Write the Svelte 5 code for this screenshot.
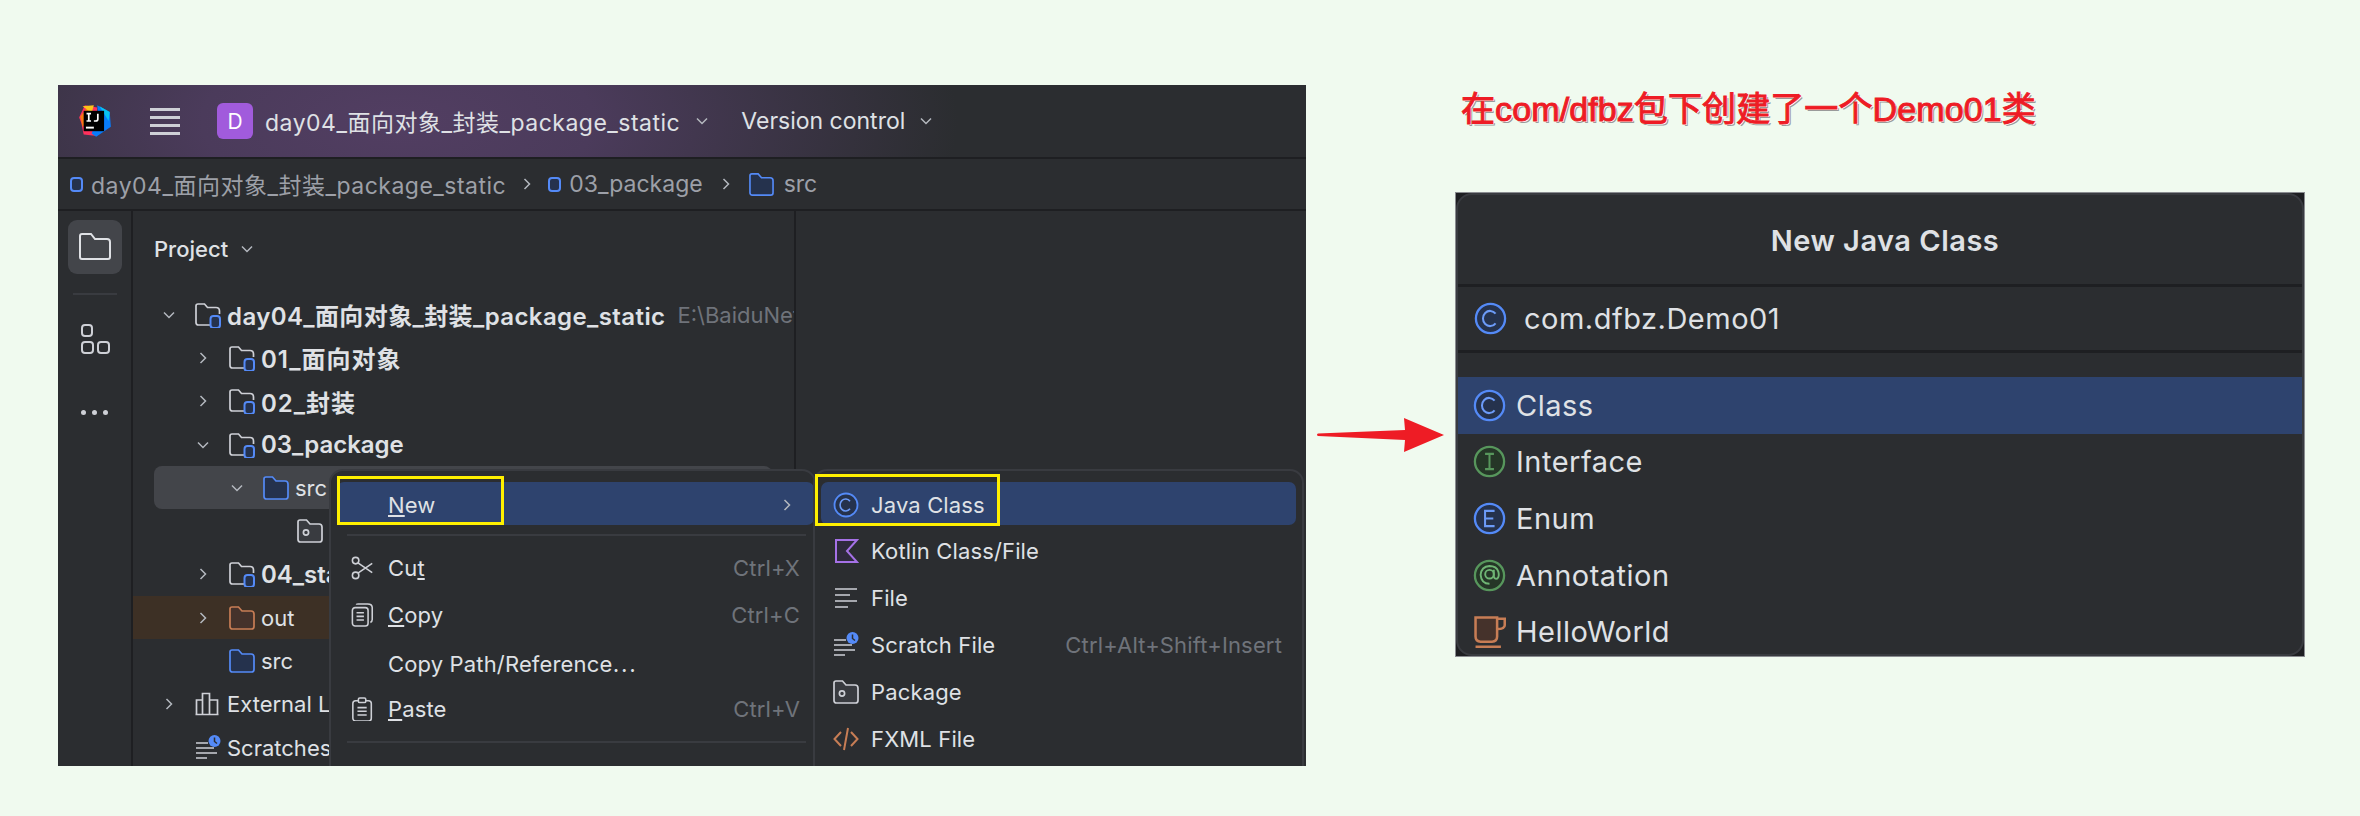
<script>
  const tree = [
    { depth: 0, chev: 'down', icon: 'module', text: 'day04_面向对象_封装_package_static', bold: true, hint: 'E:\\BaiduNetdisk', sp: 'sp-root' },
    { depth: 1, chev: 'right', icon: 'module', text: '01_面向对象', bold: true, sp: 'sp-cjk' },
    { depth: 1, chev: 'right', icon: 'module', text: '02_封装', bold: true, sp: 'sp-cjk' },
    { depth: 1, chev: 'down', icon: 'module', text: '03_package', bold: true },
    { depth: 2, chev: 'down', icon: 'blue', text: 'src', selected: true },
    { depth: 3, chev: '', icon: 'package', text: 'com.dfbz' },
    { depth: 1, chev: 'right', icon: 'module', text: '04_static', bold: true },
    { depth: 1, chev: 'right', icon: 'orange', text: 'out', excluded: true },
    { depth: 1, chev: '', icon: 'blue', text: 'src' },
    { depth: 0, chev: 'right', icon: 'libs', text: 'External Libraries' },
    { depth: 0, chev: '', icon: 'scratch', text: 'Scratches and Consoles', tight: true }
  ];
  const sub = [
    { icon: 'class', text: 'Java Class', active: true },
    { icon: 'kotlin', text: 'Kotlin Class/File' },
    { icon: 'file', text: 'File' },
    { icon: 'scratch', text: 'Scratch File', key: 'Ctrl+Alt+Shift+Insert' },
    { icon: 'package', text: 'Package' },
    { icon: 'fxml', text: 'FXML File' }
  ];
  const kinds = [
    { icon: 'class', text: 'Class', active: true },
    { icon: 'interface', text: 'Interface' },
    { icon: 'enum', text: 'Enum' },
    { icon: 'annotation', text: 'Annotation' },
    { icon: 'cup', text: 'HelloWorld' }
  ];
</script>

{#snippet chevron(dir)}
  <svg class="chev" viewBox="0 0 14 14" fill="none" stroke="#b4b8bf" stroke-width="1.5">
    {#if dir === 'down'}<path d="M2 4.5 7 9.5 12 4.5" />{:else}<path d="M4.5 2 9.5 7 4.5 12" />{/if}
  </svg>
{/snippet}

{#snippet icon(name, size = 26)}
  <svg class="ic" width={size} height={size} viewBox="0 0 26 26" fill="none" stroke-width="1.7" style="width:{size}px;height:{size}px">
    {#if name === 'module'}
      <path d="M15 23H3.5Q1 23 1 20.500V4Q1 2 3 2H9.500L12.500 5.500H21Q24.500 5.500 24.500 9V12" stroke="#ced0d6" />
      <rect x="15.500" y="14" width="9.500" height="12" rx="3" fill="#25324d" stroke="#548af7" stroke-width="2" />
    {:else if name === 'blue'}
      <path d="M3.500 24Q1 24 1 21.500V4Q1 2 3 2H9.500L13 6H22Q25 6 25 9V21.500Q25 24 22.500 24Z" fill="#25324d" stroke="#548af7" />
    {:else if name === 'orange'}
      <path d="M3.500 24Q1 24 1 21.500V4Q1 2 3 2H9.500L13 6H22Q25 6 25 9V21.500Q25 24 22.500 24Z" fill="#45322b" stroke="#c77d55" />
    {:else if name === 'package'}
      <path d="M3.500 24Q1 24 1 21.500V4Q1 2 3 2H9.500L13 6H22Q25 6 25 9V21.500Q25 24 22.500 24Z" fill="#393b40" stroke="#ced0d6" />
      <circle cx="9" cy="14.500" r="2.600" stroke="#ced0d6" />
    {:else if name === 'libs'}
      <path d="M1.500 23.500V9H7.500V23.500M7.500 23.500V2.500H14.500V23.500M14.500 23.500V9H22.500V23.500M0.500 23.500H23.500" stroke="#ced0d6" />
    {:else if name === 'scratch'}
      <path d="M1 8H13M1 13H19M1 18H22M1 23H12" stroke="#ced0d6" />
      <circle cx="19.500" cy="6" r="6" fill="#548af7" />
      <path d="M19.500 2.500V6.500L22 8.500" stroke="#2b2d30" stroke-width="1.500" />
    {:else if name === 'file'}
      <path d="M2 4H24M2 10H17M2 16H24M2 22H15" stroke="#ced0d6" />
    {:else if name === 'kotlin'}
      <path d="M3 2H24L14 13 24 24H3Z" fill="#2e2a3c" stroke="#a571e6" stroke-width="2" />
    {:else if name === 'fxml'}
      <path d="M8 6 1.500 13 8 20M18 6 24.500 13 18 20M15 2 11 24" stroke="#c77d55" stroke-width="2" />
    {:else if name === 'class'}
      <circle cx="13" cy="13" r="11.500" fill="#25324d" stroke="#548af7" stroke-width="1.800" />
      <path d="M17 9.200A5.600 6 0 1 0 17 16.800" stroke="#6c9bf8" stroke-width="1.600" />
    {:else if name === 'enum'}
      <circle cx="13" cy="13" r="11.500" fill="#25324d" stroke="#548af7" stroke-width="1.800" />
      <path d="M17 7H9.500V19H17M9.500 13H16" stroke="#6c9bf8" stroke-width="1.600" />
    {:else if name === 'interface'}
      <circle cx="13" cy="13" r="11.500" fill="#253627" stroke="#57965c" stroke-width="1.800" />
      <path d="M9.500 7H16.500M9.500 19H16.500M13 7V19" stroke="#57965c" stroke-width="1.600" />
    {:else if name === 'annotation'}
      <circle cx="13" cy="13" r="11.500" stroke="#57965c" stroke-width="1.800" fill="#253627" />
      <circle cx="13" cy="12" r="3.400" stroke="#6fb574" stroke-width="1.500" />
      <path d="M16.400 8.500V13.500Q16.600 16 19 15.500Q21 14 20 10Q18.500 5.500 13 5.500Q6.500 6 6 12.500Q6.500 19.500 13 19.500" stroke="#6fb574" stroke-width="1.500" />
    {:else if name === 'cup'}
      <path d="M2 2H19V17Q19 21 15 21H6Q2 21 2 17Z" fill="#45322b" stroke="#c77d55" stroke-width="2" />
      <path d="M19 3H25V8Q25 11 19 11M2 25H22" stroke="#c77d55" stroke-width="2" />
    {:else if name === 'cut'}
      <circle cx="5" cy="5" r="3.500" stroke="#ced0d6" />
      <circle cx="5" cy="21" r="3.500" stroke="#ced0d6" />
      <path d="M7.500 7.500 23 18M7.500 18.500 23 8" stroke="#ced0d6" />
    {:else if name === 'copy'}
      <rect x="1.500" y="5" width="17" height="20" rx="3" stroke="#ced0d6" />
      <path d="M6 2Q6 1 8 1H18Q23 1 23 5V18Q23 20.500 21 21" stroke="#ced0d6" />
      <path d="M6 10.500H14M6 14.500H14M6 18.500H14" stroke="#ced0d6" />
    {:else if name === 'paste'}
      <rect x="2" y="4" width="20" height="22" rx="3" stroke="#ced0d6" />
      <rect x="8" y="1" width="8" height="5" rx="1.500" fill="#2b2d30" stroke="#ced0d6" />
      <path d="M7 11.500H17M7 15.500H17M7 19.500H17" stroke="#ced0d6" />
    {/if}
  </svg>
{/snippet}

<div class="page">
  <section class="window">
    <header class="titlebar">
      <svg class="logo" width="34" height="34" viewBox="0 0 30 30">
        <path d="M6 1 17 3 15 28 5 27 3 17 1 12Z" fill="#fe315d" />
        <path d="M2 11 9 2 12 14 4 20Z" fill="#f97a12" />
        <path d="M4 2 14 1 12 8Z" fill="#fcc419" />
        <path d="M17 1 28 7 29 20 16 29 12 26 18 12Z" fill="#087cfa" />
        <path d="M19 2 28 7 27 15Z" fill="#07c3f2" />
        <rect x="5" y="6" width="18" height="18" fill="#000" />
        <rect x="7" y="20" width="7" height="1.700" fill="#fff" />
        <path d="M7.500 8.500H11.500M9.500 8.500V15M7.500 15H11.500M17.500 8.500V13.500Q17.500 15 15.500 15H14" fill="none" stroke="#fff" stroke-width="1.500" />
      </svg>
      <span class="burger"><i></i><i></i><i></i><i></i></span>
      <span class="badge">D</span>
      <span class="proj">day04_面向对象_封装_package_static</span>
      {@render chevron('down')}
      <span class="vc">Version control</span>
      {@render chevron('down')}
    </header>
    <nav class="crumbs">
      <span class="sq"></span><span class="c1">day04_面向对象_封装_package_static</span>
      <span class="sepchev">{@render chevron('right')}</span>
      <span class="sq"></span><span class="c2">03_package</span>
      <span class="sepchev">{@render chevron('right')}</span>
      <span class="c3">{@render icon('blue', 25)}</span><span>src</span>
    </nav>
    <div class="body">
      <aside class="rail">
        <span class="railbtn">
          <svg width="34" height="30" viewBox="0 0 34 30" fill="none" stroke="#dfe1e5" stroke-width="2"><path d="M4 27Q2 27 2 25V4Q2 2 4 2H13L17 7H29Q32 7 32 10V25Q32 27 30 27Z" fill="#43454a" /></svg>
        </span>
        <span class="railsep"></span>
        <svg class="struct" width="30" height="32" viewBox="0 0 30 32" fill="none" stroke="#ced0d6" stroke-width="2"><rect x="2" y="2" width="10" height="11" rx="3" /><rect x="2" y="19" width="11" height="11" rx="3" /><rect x="18" y="19" width="11" height="11" rx="3" /></svg>
        <span class="dots"><i></i><i></i><i></i></span>
      </aside>
      <div class="projectpane">
        <div class="pane-head"><b>Project</b>{@render chevron('down')}</div>
        <ul class="tree">
          {#each tree as r}
            <li class="row d{r.depth}" class:selected={r.selected} class:excluded={r.excluded} class:bold={r.bold} class:tight={r.tight}>
              <span class="twist">{#if r.chev}{@render chevron(r.chev)}{/if}</span>
              {@render icon(r.icon, 26)}
              <span class="label {r.sp ?? ''}">{r.text}</span>
              {#if r.hint}<span class="hint">{r.hint}</span>{/if}
            </li>
          {/each}
        </ul>
      </div>
      <div class="editor"></div>
    </div>

    <div class="menu main">
      <div class="mi active"><span class="slot"></span><span class="mt"><u>N</u>ew</span>{@render chevron('right')}</div>
      <hr />
      <div class="mi"><span class="slot">{@render icon('cut', 24)}</span><span class="mt">Cu<u>t</u></span><span class="key">Ctrl+X</span></div>
      <div class="mi"><span class="slot">{@render icon('copy', 24)}</span><span class="mt"><u>C</u>opy</span><span class="key">Ctrl+C</span></div>
      <div class="mi"><span class="slot"></span><span class="mt">Copy Path/Reference⋯</span></div>
      <div class="mi"><span class="slot">{@render icon('paste', 24)}</span><span class="mt"><u>P</u>aste</span><span class="key">Ctrl+V</span></div>
      <hr />
      <div class="mi"><span class="slot"></span><span class="mt">Find Usages</span><span class="key">Alt+F7</span></div>
    </div>
    <div class="menu submenu">
      {#each sub as s}
        <div class="mi" class:active={s.active}>
          <span class="slot">{@render icon(s.icon, 26)}</span><span class="mt">{s.text}</span>
          {#if s.key}<span class="key">{s.key}</span>{/if}
        </div>
      {/each}
    </div>
    <span class="mark mark-new"></span>
    <span class="mark mark-java"></span>
  </section>

  <svg class="arrow" width="127" height="36" viewBox="0 0 127 36">
    <path d="M1 15.500 88 12 87 0 127 17 87 34 88 22 1 18Q-1 16.500 1 15.500Z" fill="#ee1c25" />
  </svg>

  <div class="right">
    <h2 class="note">在com/dfbz包下创建了一个Demo01类</h2>
    <section class="dialogframe">
      <div class="dialog">
        <div class="dtitle">New Java Class</div>
        <div class="dfield">{@render icon('class', 33)}<span>com.dfbz.Demo01</span></div>
        <ul class="kinds">
          {#each kinds as k}
            <li class:active={k.active}>{@render icon(k.icon, 33)}<span>{k.text}</span></li>
          {/each}
        </ul>
      </div>
    </section>
  </div>
</div>

<style>
  :global(body) { margin: 0; background: #f0faef; }
  .page {
    width: 2360px; height: 816px; box-sizing: border-box; overflow: hidden;
    display: flex; align-items: flex-start; padding: 85px 0 0 58px;
    font-family: Inter, "Noto Sans CJK SC", sans-serif; color: #dfe1e5; font-size: 22px;
  }
  svg { display: block; flex: none; }
  .chev { width: 14px; height: 14px; }
  ul { list-style: none; margin: 0; padding: 0; }

  .window { position: relative; width: 1248px; height: 681px; overflow: hidden; background: #2b2d30; flex: none; }
  .titlebar {
    height: 74px; display: flex; align-items: center; box-sizing: border-box; padding-left: 20px; font-size: 23px;
    background: radial-gradient(ellipse 560px 240px at 340px 36px, #523e62 0%, #4b3b5b 35%, #2b2d30 100%);
    border-bottom: 2px solid #1e1f22;
  }
  .logo { margin-right: 38px; }
  .burger { display: flex; flex-direction: column; gap: 5px; width: 30px; margin-right: 37px; }
  .burger i { height: 3px; background: #ced0d6; }
  .badge {
    width: 36px; height: 36px; border-radius: 6px; background: #a15bdc; color: #fff;
    display: flex; align-items: center; justify-content: center; font-size: 21px; margin-right: 12px;
  }
  .proj { margin-right: 15px; letter-spacing: 0.5px; }
  .vc { margin: 0 14px 0 32px; }

  .crumbs {
    height: 52px; display: flex; align-items: center; box-sizing: border-box; padding-left: 12px; font-size: 23px;
    color: #9da0a8; border-bottom: 2px solid #1e1f22;
  }
  .c1 { letter-spacing: 0.5px; }
  .c2 { margin-right: 2px; }
  .sq { width: 13px; height: 15px; border: 2px solid #548af7; border-radius: 4px; background: #25324d; margin-right: 8px; box-sizing: border-box; }
  .sepchev { margin: 0 14px; }
  .c3 { margin-right: 10px; margin-left: 2px; }

  .body { display: flex; height: 555px; }
  .rail { width: 73px; border-right: 2px solid #1e1f22; box-sizing: content-box; display: flex; flex-direction: column; align-items: center; padding-top: 9px; flex: none; }
  .railbtn { width: 54px; height: 54px; border-radius: 9px; background: #43454a; display: flex; align-items: center; justify-content: center; }
  .railsep { width: 44px; height: 2px; background: #393b40; margin: 19px 0 28px; }
  .struct { margin-bottom: 55px; }
  .dots { display: flex; gap: 6px; }
  .dots i { width: 5px; height: 5px; border-radius: 50%; background: #ced0d6; }

  .projectpane { width: 661px; border-right: 2px solid #1e1f22; overflow: hidden; flex: none; }
  .pane-head { height: 82px; box-sizing: border-box; padding: 0 0 7px 21px; display: flex; align-items: center; gap: 12px; margin-top: 0; }
  .pane-head b { font-weight: 500; }
  .tree { width: 700px; }
  .row { height: 43.3px; display: flex; align-items: center; white-space: nowrap; position: relative; }
  .row.bold { font-weight: 600; font-size: 24px; }
  .sp-root { letter-spacing: 0.4px; }
  .sp-cjk { letter-spacing: 1px; }
  .row.d0 { padding-left: 29px; }
  .row.d1 { padding-left: 63px; }
  .row.d2 { padding-left: 97px; }
  .row.d3 { padding-left: 131px; }
  .twist { width: 33px; flex: none; display: flex; }
  .row .ic { margin-right: 6px; }
  .row.selected { margin-left: 21px; padding-left: 76px; width: 618px; box-sizing: border-box; border-radius: 8px; background: #43454a; }
  .row.excluded { background: #3d3025; }
  .hint { color: #6f737a; font-weight: 400; font-size: 22px; margin-left: 12px; }
  .editor { flex: 1; }

  .menu { position: absolute; top: 384px; background: #2b2d30; border: 2px solid #393b40; border-radius: 14px; box-sizing: border-box; padding: 11px 0; height: 320px; letter-spacing: 0.15px; }
  .main { left: 271px; width: 487px; }
  .submenu { left: 755px; width: 491px; }
  .mi { height: 47px; display: flex; align-items: center; margin: 0 6px; border-radius: 7px; white-space: nowrap; box-sizing: border-box; padding: 0 14px 0 14px; }
  .mi.active { background: #2e436e; height: 43px; padding-top: 3px; padding-right: 20px; }
  .main .mi { margin-right: 0; }
  .main .mi.active { margin-bottom: 2px; }
  .slot { width: 37px; flex: none; display: flex; }
  .submenu .mi.active { margin-bottom: 2px; }
  .submenu .mi { padding-left: 12px; }
  .submenu .slot { width: 38px; }
  .mt { flex: 1; }
  .key { color: #6f737a; }
  .menu hr { border: none; height: 2px; background: #393b40; margin: 9px 8px 8px 16px; }

  .mark { position: absolute; border: 3px solid #fff000; box-sizing: border-box; }
  .mark-new { left: 279px; top: 391px; width: 167px; height: 49px; }
  .mark-java { left: 757px; top: 389px; width: 185px; height: 52px; }

  .arrow { margin: 333px 0 0 11px; flex: none; }
  .right { margin-left: 11px; display: flex; flex-direction: column; flex: none; }
  .note {
    margin: 4px 0 0 6px; height: 40px; line-height: 40px; font-family: "Liberation Sans", "Noto Sans CJK SC", sans-serif;
    font-size: 34px; font-weight: 400; color: #ee1c25; -webkit-text-stroke: 1px #ee1c25; letter-spacing: 0.1px;
    text-shadow: 1px 1px 0 #fff, 2px 2px 0 #9a9a9a; white-space: nowrap;
  }
  .dialogframe { margin-top: 63px; width: 850px; height: 465px; background: #1e1f22; border: 1px solid #8a8c90; box-sizing: border-box; }
  .dialog { height: 100%; box-sizing: border-box; background: #2b2d30; border: 2px solid #393b40; border-radius: 16px; overflow: hidden; }
  .dtitle { height: 92px; display: flex; align-items: center; justify-content: center; font-size: 29px; font-weight: 600; letter-spacing: 0.5px; border-bottom: 3px solid #1e1f22; box-sizing: border-box; padding: 1px 0 0 10px; }
  .dfield { height: 66px; display: flex; align-items: center; gap: 17px; padding-left: 16px; font-size: 29px; letter-spacing: 0.5px; border-bottom: 3px solid #1e1f22; box-sizing: border-box; }
  .kinds { padding-top: 24px; }
  .kinds li { height: 56.6px; display: flex; align-items: center; gap: 10px; padding-left: 15px; font-size: 29px; letter-spacing: 0.5px; }
  .kinds li.active { background: #2e436e; }
</style>
